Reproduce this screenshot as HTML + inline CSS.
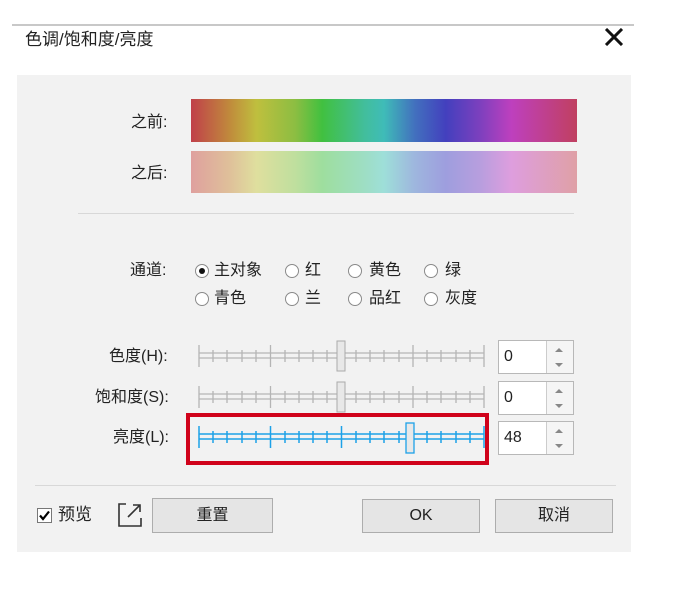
<!DOCTYPE html>
<html><head><meta charset="utf-8"><style>
body{margin:0;width:677px;height:600px;background:#fff;position:relative;overflow:hidden;font-family:"Liberation Sans","Noto Sans CJK SC",sans-serif;color:#222;}
.a{position:absolute;}
.t{font-size:16px;white-space:nowrap;line-height:20px;}
.btn{position:absolute;background:#e5e5e5;border:1px solid #adadad;box-sizing:border-box;font-size:16px;text-align:center;}
.r{position:absolute;width:14px;height:14px;border:1px solid #8a8a8a;border-radius:50%;background:#fff;box-sizing:border-box;}
.spin{position:absolute;width:76px;height:34px;border:1px solid #b8b8b8;background:#fff;box-sizing:border-box;}
.spin span{position:absolute;left:5px;top:7px;font-size:16px;}
.spin i{position:absolute;right:0;top:0;width:26px;height:32px;border-left:1px solid #ccc;background:#f5f5f5;}
</style></head><body>
<div class="a" style="left:12px;top:24px;width:622px;height:2px;background:#c8c8c8"></div>
<div class="a t" style="left:25px;top:30px;font-size:17px">色调/饱和度/亮度</div>
<svg class="a" style="left:604px;top:28px" width="20" height="18"><path d="M2 1L18 17M18 1L2 17" stroke="#111" stroke-width="3"/></svg>
<div class="a" style="left:17px;top:75px;width:614px;height:477px;background:#f2f2f2"></div>
<div class="a t" style="left:131px;top:113px">之前:</div>
<div class="a t" style="left:131px;top:164px">之后:</div>
<div class="a" style="left:191px;top:99px;width:386px;height:43px;background:linear-gradient(90deg,#c0404a,#c08a3c 10%,#bfbf3e 17%,#8cbe42 27%,#41c040 34%,#42be9c 45%,#3fbcb8 50%,#4270be 58%,#4340be 66%,#7e40be 75%,#be40be 83%,#c04060 100%)"></div>
<div class="a" style="left:191px;top:151px;width:386px;height:42px;background:linear-gradient(90deg,#dfa09e,#dfc09a 10%,#dfdf9e 17%,#bfdf9e 27%,#9ede9e 34%,#9edec4 45%,#9edfd9 50%,#9eb6de 58%,#9e9ede 66%,#b89ede 75%,#de9ede 83%,#dfa0a6 100%)"></div>
<div class="a" style="left:78px;top:213px;width:496px;height:1px;background:#d8d8d8"></div>
<div class="a t" style="left:130px;top:261px">通道:</div>
<div class="r" style="left:195px;top:264px"><div style="position:absolute;left:3px;top:3px;width:6px;height:6px;border-radius:50%;background:#111"></div></div>
<div class="a t" style="left:214px;top:261px">主对象</div>
<div class="r" style="left:285px;top:264px"></div><div class="a t" style="left:305px;top:261px">红</div>
<div class="r" style="left:348px;top:264px"></div><div class="a t" style="left:369px;top:261px">黄色</div>
<div class="r" style="left:424px;top:264px"></div><div class="a t" style="left:445px;top:261px">绿</div>
<div class="r" style="left:195px;top:292px"></div><div class="a t" style="left:214px;top:289px">青色</div>
<div class="r" style="left:285px;top:292px"></div><div class="a t" style="left:305px;top:289px">兰</div>
<div class="r" style="left:348px;top:292px"></div><div class="a t" style="left:369px;top:289px">品红</div>
<div class="r" style="left:424px;top:292px"></div><div class="a t" style="left:445px;top:289px">灰度</div>
<div class="a t" style="left:109px;top:347px">色度(H):</div>
<div class="a t" style="left:95px;top:388px">饱和度(S):</div>
<div class="a t" style="left:113px;top:428px">亮度(L):</div>
<svg class="a" style="left:0;top:0" width="677" height="600">
<g id="s1" stroke="#b5b5b5" stroke-width="1.3" fill="none">
<path d="M199 353H484M199 358H484"/>
<path d="M199 345V367M270.5 345V367M341.5 345V367M413 345V367M484 345V367"/>
<path d="M213 350V362M227 350V362M242 350V362M256 350V362M285 350V362M299 350V362M313 350V362M327 350V362M356 350V362M370 350V362M384 350V362M399 350V362M427 350V362M441 350V362M456 350V362M470 350V362"/>
</g>
<rect x="337" y="341" width="8" height="30" fill="#e8e8e8" stroke="#aaa"/>
<use href="#s1" y="41"/>
<rect x="337" y="382" width="8" height="30" fill="#e8e8e8" stroke="#aaa"/>
<g transform="translate(0,81)" stroke="#1da1e8" stroke-width="1.5" fill="none">
<path d="M199 353H484M199 358H484"/>
<path d="M199 345V367M270.5 345V367M341.5 345V367M413 345V367M484 345V367"/>
<path d="M213 350V362M227 350V362M242 350V362M256 350V362M285 350V362M299 350V362M313 350V362M327 350V362M356 350V362M370 350V362M384 350V362M399 350V362M427 350V362M441 350V362M456 350V362M470 350V362"/>
</g>
<rect x="406" y="423" width="8" height="30" fill="#e8e8e8" stroke="#1da1e8" stroke-width="1.3"/>
<rect x="188" y="415" width="299" height="48" fill="none" stroke="#d0021b" stroke-width="4"/>
</svg>
<div class="spin" style="left:498px;top:340px"><span>0</span><i></i></div>
<div class="spin" style="left:498px;top:381px"><span>0</span><i></i></div>
<div class="spin" style="left:498px;top:421px"><span>48</span><i></i></div>
<svg class="a" style="left:0;top:0" width="677" height="600">
<path d="M555 352l4-4 4 4zM555 363l4 4 4-4zM555 393l4-4 4 4zM555 404l4 4 4-4zM555 433l4-4 4 4zM555 444l4 4 4-4z" fill="#888"/>
</svg>
<div class="a" style="left:35px;top:485px;width:581px;height:1px;background:#d8d8d8"></div>
<div class="a" style="left:37px;top:508px;width:15px;height:15px;border:1px solid #777;background:#fff;box-sizing:border-box"></div>
<svg class="a" style="left:37px;top:508px" width="15" height="15"><path d="M3 7.5L6 11L12 3.5" stroke="#000" stroke-width="2.2" fill="none"/></svg>
<div class="a t" style="left:58px;top:505px;font-size:17px">预览</div>
<svg class="a" style="left:117px;top:502px" width="26" height="26"><path d="M9 2H2V24H24V16" stroke="#333" stroke-width="1.6" fill="none"/><path d="M11 15L23 3M16 3H23V10" stroke="#333" stroke-width="1.6" fill="none"/></svg>
<div class="btn" style="left:152px;top:498px;width:121px;height:35px;line-height:33px">重置</div>
<div class="btn" style="left:362px;top:499px;width:118px;height:34px;line-height:32px">OK</div>
<div class="btn" style="left:495px;top:499px;width:118px;height:34px;line-height:32px">取消</div>
</body></html>
